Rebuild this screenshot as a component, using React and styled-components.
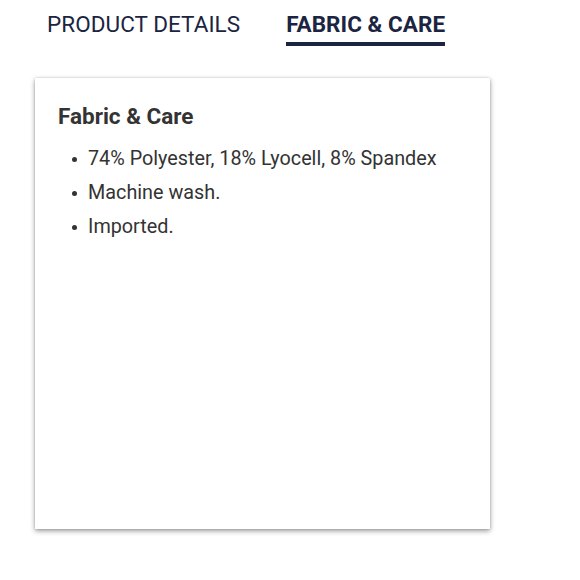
import React, { useState } from 'react'
import styled, { createGlobalStyle } from 'styled-components'

const GlobalStyle = createGlobalStyle`
  body {
    margin: 0;
    background: #ffffff;
    font-family: Roboto, "Liberation Sans", Arial, sans-serif;
  }
`

const Page = styled.div`
  padding: 8px 0 30px 35px;
`

const Tabs = styled.div`
  display: flex;
  gap: 46px;
  padding-left: 12px;
`

const Tab = styled.button`
  border: none;
  background: none;
  padding: 3px 0 4px;
  font-family: inherit;
  font-size: 22.5px;
  line-height: 27px;
  letter-spacing: 0.05px;
  color: #1b2440;
  font-weight: ${p => (p.$active ? 700 : 400)};
  border-bottom: 4px solid ${p => (p.$active ? '#1b2440' : 'transparent')};
  cursor: pointer;
`

const Card = styled.div`
  margin-top: 32px;
  width: 455px;
  height: 451px;
  box-sizing: border-box;
  padding: 22px 23px;
  background: #fff;
  box-shadow: 0 2px 5px rgba(0, 0, 0, 0.4), 0 0 2px rgba(0, 0, 0, 0.15);
`

const Heading = styled.h3`
  margin: 0;
  font-size: 22.5px;
  line-height: 32px;
  font-weight: 700;
  color: #333333;
`

const List = styled.ul`
  margin: 10px 0 0;
  padding: 0;
  list-style: none;
  color: #333333;
  font-size: 19.8px;
  line-height: 34px;
`

const Item = styled.li`
  display: flex;
  align-items: center;

  &::before {
    content: '';
    flex-shrink: 0;
    width: 5px;
    height: 5px;
    margin: 0 11px 0 14px;
    border-radius: 50%;
    background: #333333;
  }
`

const tabs = ['PRODUCT DETAILS', 'FABRIC & CARE']
const items = ['74% Polyester, 18% Lyocell, 8% Spandex', 'Machine wash.', 'Imported.']

export default function App() {
  const [active, setActive] = useState(1)
  return (
    <>
      <GlobalStyle />
      <Page>
        <Tabs>
          {tabs.map((t, i) => (
            <Tab key={t} $active={active === i} onClick={() => setActive(i)}>
              {t}
            </Tab>
          ))}
        </Tabs>
        <Card>
          <Heading>Fabric &amp; Care</Heading>
          <List>
            {items.map(item => (
              <Item key={item}>{item}</Item>
            ))}
          </List>
        </Card>
      </Page>
    </>
  )
}
